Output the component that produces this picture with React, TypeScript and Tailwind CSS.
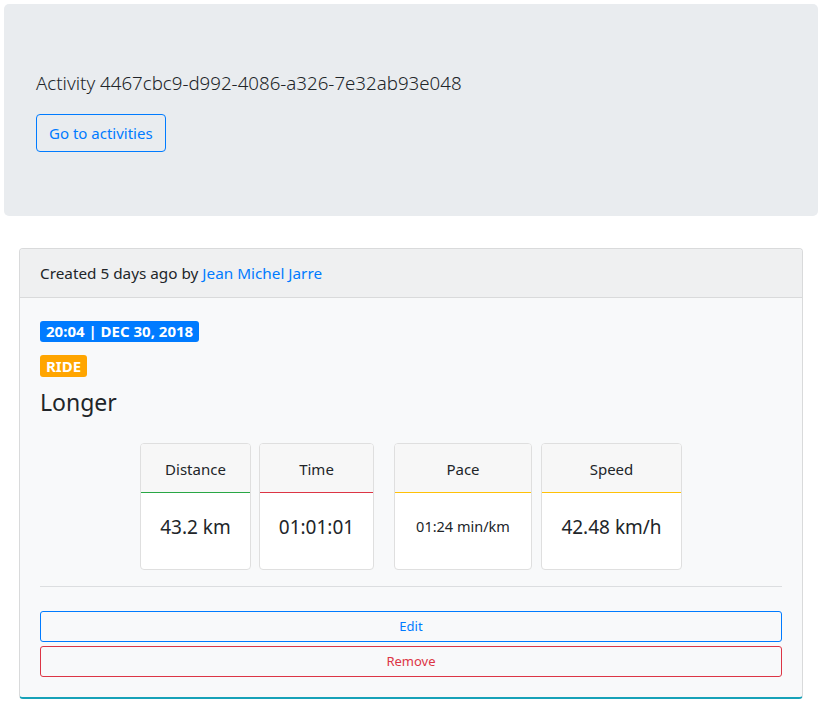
const font = { fontFamily: '"Noto Sans", "Open Sans", sans-serif' };

interface Stat {
  label: string;
  value: string;
  width: string;
  border: string;
  valueClass: string;
  gap: string;
}

const stats: Stat[] = [
  { label: 'Distance', value: '43.2 km', width: 'w-[111px]', border: 'border-[#28a745]', valueClass: 'text-[19px]', gap: '' },
  { label: 'Time', value: '01:01:01', width: 'w-[115px]', border: 'border-[#dc3545]', valueClass: 'text-[19px]', gap: 'ml-[8px]' },
  { label: 'Pace', value: '01:24 min/km', width: 'w-[138px]', border: 'border-[#ffc107]', valueClass: 'text-[14.5px]', gap: 'ml-[20px]' },
  { label: 'Speed', value: '42.48 km/h', width: 'w-[141px]', border: 'border-[#ffc107]', valueClass: 'text-[19px]', gap: 'ml-[9px]' },
];

function StatCard({ stat }: { stat: Stat }) {
  return (
    <div className={`${stat.width} ${stat.gap} h-[127px] bg-white border border-[#dfdfdf] rounded-[4px] flex flex-col overflow-hidden`}>
      <div className={`h-[49px] pt-[2px] bg-[#f7f7f7] border-b ${stat.border} flex items-center justify-center text-[15px] text-[#212529]`}>
        {stat.label}
      </div>
      <div className={`flex-1 pb-[8px] flex items-center justify-center ${stat.valueClass} text-[#212529]`}>
        {stat.value}
      </div>
    </div>
  );
}

export default function App() {
  return (
    <div className="bg-white min-h-screen pt-[4px] text-[#212529]" style={font}>
      {/* Jumbotron */}
      <div className="ml-[4px] w-[814px] bg-[#e9ecef] rounded-[5px] pt-[64px] pb-[64px] px-[32px]">
        <p className="text-[18.7px] font-light leading-[30px] mb-[16px]">
          Activity 4467cbc9-d992-4086-a326-7e32ab93e048
        </p>
        <button className="h-[38px] px-[12px] border border-[#007bff] text-[#007bff] rounded-[4px] text-[15px] leading-none">
          Go to activities
        </button>
      </div>

      {/* Card */}
      <div className="ml-[19px] mt-[32px] w-[784px] border border-[#d9dadb] border-b-2 border-b-[#17a2b8] rounded-[4px] bg-[#f8f9fa] overflow-hidden">
        <div className="h-[49px] bg-[#eff0f1] border-b border-[#d9dadb] px-[20px] flex items-center text-[15.3px]">
          Created 5 days ago by&nbsp;<a className="text-[#007bff]" href="#">Jean Michel Jarre</a>
        </div>
        <div className="px-[20px] pt-[21px] pb-[20px]">
          <span className="inline-block bg-[#007bff] text-white font-bold text-[15px] leading-[21px] px-[6px] rounded-[3px]">
            20:04 | DEC 30, 2018
          </span>
          <div className="mt-[11px]">
            <span className="inline-block bg-[#ffa500] text-white font-bold text-[15px] leading-[22px] px-[6px] rounded-[3px]">
              RIDE
            </span>
          </div>
          <h4 className="text-[23px] leading-[28px] mt-[10px]">Longer</h4>

          <div className="flex justify-center mt-[27px]">
            {stats.map((s) => (
              <StatCard key={s.label} stat={s} />
            ))}
          </div>

          <hr className="mt-[16px] border-t border-[#dcdee0]" />

          <div className="mt-[24px] flex flex-col gap-[4px]">
            <button className="h-[31px] w-full border border-[#007bff] text-[#007bff] rounded-[3px] text-[13px]">
              Edit
            </button>
            <button className="h-[31px] w-full border border-[#dc3545] text-[#dc3545] rounded-[3px] text-[13px]">
              Remove
            </button>
          </div>
        </div>
      </div>
    </div>
  );
}
